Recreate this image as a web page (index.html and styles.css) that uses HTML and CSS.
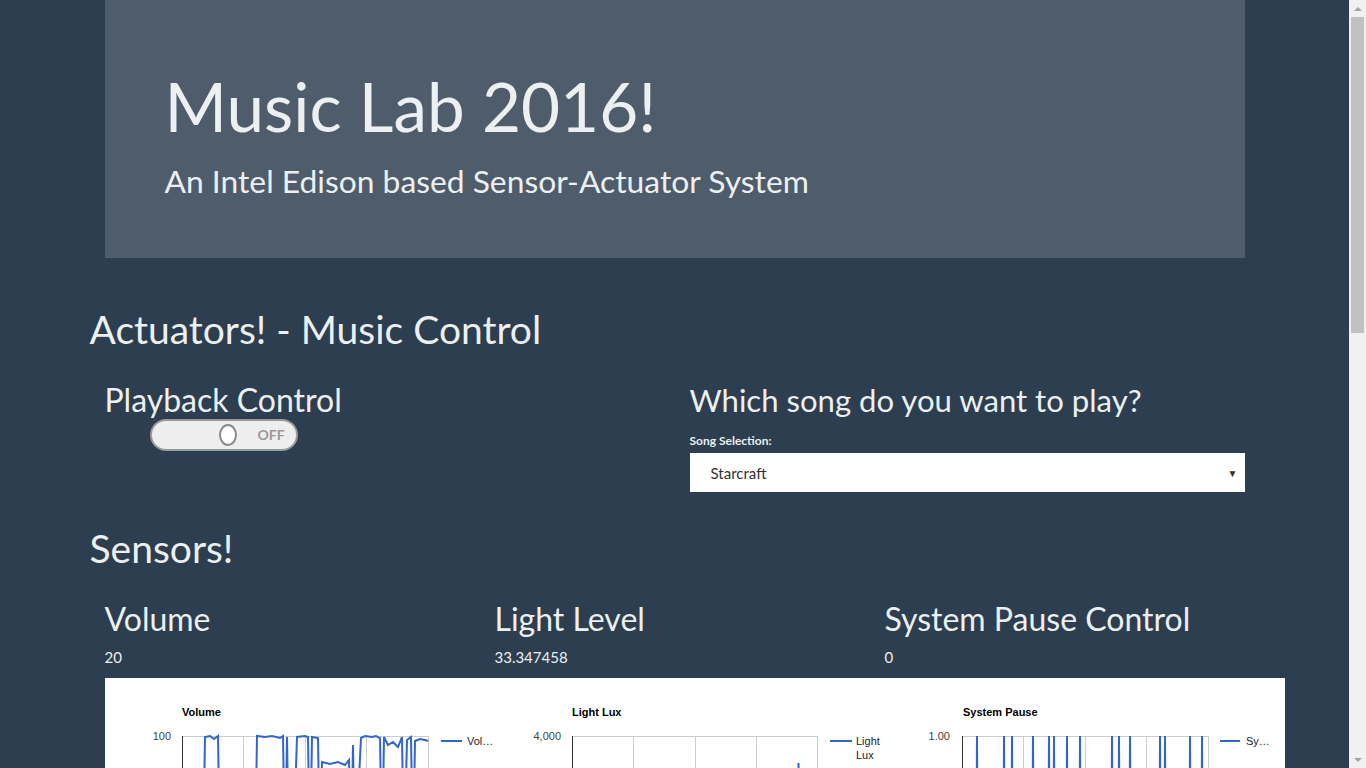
FILE: index.html
```html
<!DOCTYPE html>
<html lang="en">
<head>
<meta charset="utf-8">
<title>Music Lab 2016!</title>
<link rel="stylesheet" href="styles.css">
</head>
<body>
<div class="scrollbar" aria-hidden="true">
  <div class="sb-button sb-up"></div>
  <div class="sb-thumb"></div>
  <div class="sb-track"></div>
  <div class="sb-button sb-down"></div>
</div>
<div class="container">
  <header class="jumbotron">
    <h1 class="jumbo-title">Music Lab 2016!</h1>
    <p class="jumbo-sub">An Intel Edison based Sensor-Actuator System</p>
  </header>

  <h1 class="section-title">Actuators! - Music Control</h1>
  <div class="row">
    <div class="col-6">
      <h2 class="sub-title">Playback Control</h2>
      <div class="toggle">
        <span class="knob"></span>
        <span class="toggle-label">OFF</span>
      </div>
    </div>
    <div class="col-6">
      <h2 class="sub-title song-title">Which song do you want to play?</h2>
      <label class="field-label">Song Selection:</label>
      <div class="select">
        <span>Starcraft</span>
        <span class="caret">&#9660;</span>
      </div>
    </div>
  </div>

  <h1 class="section-title sensors-title">Sensors!</h1>
  <div class="row">
    <div class="col-4">
      <h2 class="sub-title sensor-name">Volume</h2>
      <div class="value">20</div>
    </div>
    <div class="col-4">
      <h2 class="sub-title sensor-name">Light Level</h2>
      <div class="value">33.347458</div>
    </div>
    <div class="col-4">
      <h2 class="sub-title sensor-name">System Pause Control</h2>
      <div class="value">0</div>
    </div>
  </div>

  <div class="charts">
    <svg class="chart" width="390" height="320" viewBox="0 0 390 320">
      <text class="c-title" x="77" y="38">Volume</text>
      <text class="c-axis" x="66" y="62" text-anchor="end">100</text>
      <g class="grid">
        <line x1="77" y1="58" x2="323" y2="58"/>
        <line x1="138.5" y1="58" x2="138.5" y2="258"/>
        <line x1="200" y1="58" x2="200" y2="258"/>
        <line x1="261.5" y1="58" x2="261.5" y2="258"/>
        <line x1="323" y1="58" x2="323" y2="258"/>
      </g>
      <line class="axis" x1="77.5" y1="58" x2="77.5" y2="258"/>
      <polyline class="series" points="77,182 98,182 100,59 105,58 109,61 113,58 115,182 150,182 152,58 160,59 167,58 175,60 178,58 180,182 182,59 184,182 186,92 188,182 192,59 200,58 203,59 205,182 207,59 213,60 215,182 217,84 225,86 233,84 240,87 244,82 246,182 248,67 250,182 256,60 260,58 267,59 271,58 275,60 277,182 279,59 283,67 288,64 293,69 297,59 299,182 302,62 306,59 308,182 310,63 315,61 320,62 323,63"/>
      <line class="series" x1="336" y1="63" x2="357" y2="63"/>
      <text class="c-legend" x="362" y="67">Vol…</text>
    </svg>
    <svg class="chart" width="390" height="320" viewBox="0 0 390 320">
      <text class="c-title" x="77" y="38">Light Lux</text>
      <text class="c-axis" x="66" y="62" text-anchor="end">4,000</text>
      <g class="grid">
        <line x1="77" y1="58" x2="322" y2="58"/>
        <line x1="138.5" y1="58" x2="138.5" y2="258"/>
        <line x1="200" y1="58" x2="200" y2="258"/>
        <line x1="261" y1="58" x2="261" y2="258"/>
        <line x1="322" y1="58" x2="322" y2="258"/>
      </g>
      <line class="axis" x1="77.5" y1="58" x2="77.5" y2="258"/>
      <polyline class="series" points="77,256 302,256 303.5,85 305,256 322,256"/>
      <line class="series" x1="335" y1="63" x2="357" y2="63"/>
      <text class="c-legend" x="361" y="67">Light</text>
      <text class="c-legend" x="361" y="81">Lux</text>
    </svg>
    <svg class="chart" width="390" height="320" viewBox="0 0 390 320">
      <text class="c-title" x="78" y="38">System Pause</text>
      <text class="c-axis" x="65" y="62" text-anchor="end">1.00</text>
      <g class="grid">
        <line x1="77" y1="58" x2="323" y2="58"/>
        <line x1="138.5" y1="58" x2="138.5" y2="258"/>
        <line x1="200" y1="58" x2="200" y2="258"/>
        <line x1="261.5" y1="58" x2="261.5" y2="258"/>
        <line x1="323" y1="58" x2="323" y2="258"/>
      </g>
      <line class="axis" x1="77.5" y1="58" x2="77.5" y2="258"/>
      <polyline class="series" points="77,257 91,257 92,58 93,257 118,257 119,58 120,257 126,257 127,58 128,257 147,257 148,58 149,257 163,257 164,58 165,257 168,257 169,58 170,257 181,257 182,58 183,257 194,257 195,58 196,257 226,257 227,58 228,257 233,257 234,58 235,257 244,257 245,58 246,257 274,257 275,58 276,257 279,257 280,58 281,257 304,257 305,58 306,257 316,257 317,58 318,257 323,257"/>
      <line class="series" x1="335" y1="63" x2="355" y2="63"/>
      <text class="c-legend" x="361" y="67">Sy…</text>
    </svg>
  </div>
</div>
</body>
</html>
```

FILE: styles.css
```css
* { box-sizing: border-box; }

html, body {
  margin: 0;
  padding: 0;
}

body {
  background: #2c3e50;
  color: #ecf0f1;
  font-family: Lato, "Open Sans", sans-serif;
  font-size: 15px;
  line-height: 1.2;
  padding-right: 17px;
  padding-bottom: 786px;
}

/* window scrollbar, drawn over the page edge */
.scrollbar {
  position: fixed;
  top: 0;
  right: 0;
  width: 17px;
  height: 100vh;
  background: #f1f1f1;
  display: flex;
  flex-direction: column;
  z-index: 10;
}

.sb-button {
  height: 17px;
  flex: none;
  display: flex;
  align-items: center;
  justify-content: center;
}

.sb-up::before,
.sb-down::before {
  content: "";
  width: 0;
  height: 0;
  border-left: 4px solid transparent;
  border-right: 4px solid transparent;
}

.sb-up::before {
  border-bottom: 4px solid #a3a3a3;
}

.sb-down::before {
  border-top: 4px solid #a3a3a3;
}

.sb-thumb {
  height: 316px;
  flex: none;
  margin: 0 2px;
  background: #c1c1c1;
}

.sb-track {
  flex: 1;
}

.container {
  width: 1170px;
  margin: 0 auto;
  padding: 0 15px;
}

.jumbotron {
  background: #4e5c6c;
  padding: 66px 60px 57px;
}

.jumbo-title {
  margin: 0;
  font-size: 67.4px;
  font-weight: 400;
  line-height: 80.4px;
  color: #ecf0f1;
}

.jumbo-sub {
  margin: 16px 0 0;
  font-size: 31.8px;
  line-height: 38.4px;
  color: #ecf0f1;
}

.section-title {
  margin: 48px 0 0 -15px;
  font-size: 39px;
  font-weight: 400;
  line-height: 1.2;
}

.sensors-title {
  margin-top: 33px;
}

.row {
  display: flex;
  margin: 0 -15px;
}

.col-6 {
  width: 50%;
  padding: 0 15px;
}

.col-4 {
  width: 33.3333%;
  padding: 0 15px;
}

.sub-title {
  margin: 28px 0 0;
  font-size: 32px;
  font-weight: 400;
  line-height: 1.2;
}

.song-title {
  font-size: 31.1px;
  line-height: 38.4px;
}

.toggle {
  width: 148px;
  height: 32px;
  margin-left: 45px;
  border: 2px solid #999;
  border-radius: 16px;
  background: #eeeeee;
  display: flex;
  align-items: center;
  padding-left: 67px;
}

.knob {
  width: 18px;
  height: 22px;
  border: 2px solid #8a8a8a;
  border-radius: 50%;
  background: #fff;
}

.toggle-label {
  margin-left: 21px;
  font-size: 14px;
  font-weight: 700;
  color: #999;
}

.field-label {
  display: block;
  margin-top: 14px;
  font-size: 12px;
  font-weight: 700;
  line-height: 15px;
  color: #ecf0f1;
}

.select {
  margin-top: 5px;
  height: 39px;
  background: #fff;
  color: #333;
  display: flex;
  align-items: center;
  justify-content: space-between;
  padding: 0 7px 0 21px;
  font-size: 15px;
}

.caret {
  font-size: 10px;
  color: #333;
}

.sensor-name {
  margin-top: 28px;
}

.value {
  margin-top: 10px;
  font-size: 15px;
  line-height: 18px;
}

.charts {
  margin-top: 12px;
  width: 1180px;
  background: #fff;
  display: flex;
}

.chart {
  display: block;
  flex: none;
  font-family: "Liberation Sans", Arial, sans-serif;
}

.c-title {
  font-size: 11px;
  font-weight: 700;
  fill: #000;
}

.c-axis {
  font-size: 11px;
  fill: #444;
}

.c-legend {
  font-size: 11px;
  fill: #222;
}

.grid line {
  stroke: #ccc;
  stroke-width: 1;
  shape-rendering: crispEdges;
}

.axis {
  stroke: #333;
  stroke-width: 1;
  shape-rendering: crispEdges;
}

.series {
  fill: none;
  stroke: #3366cc;
  stroke-width: 2;
}
```
